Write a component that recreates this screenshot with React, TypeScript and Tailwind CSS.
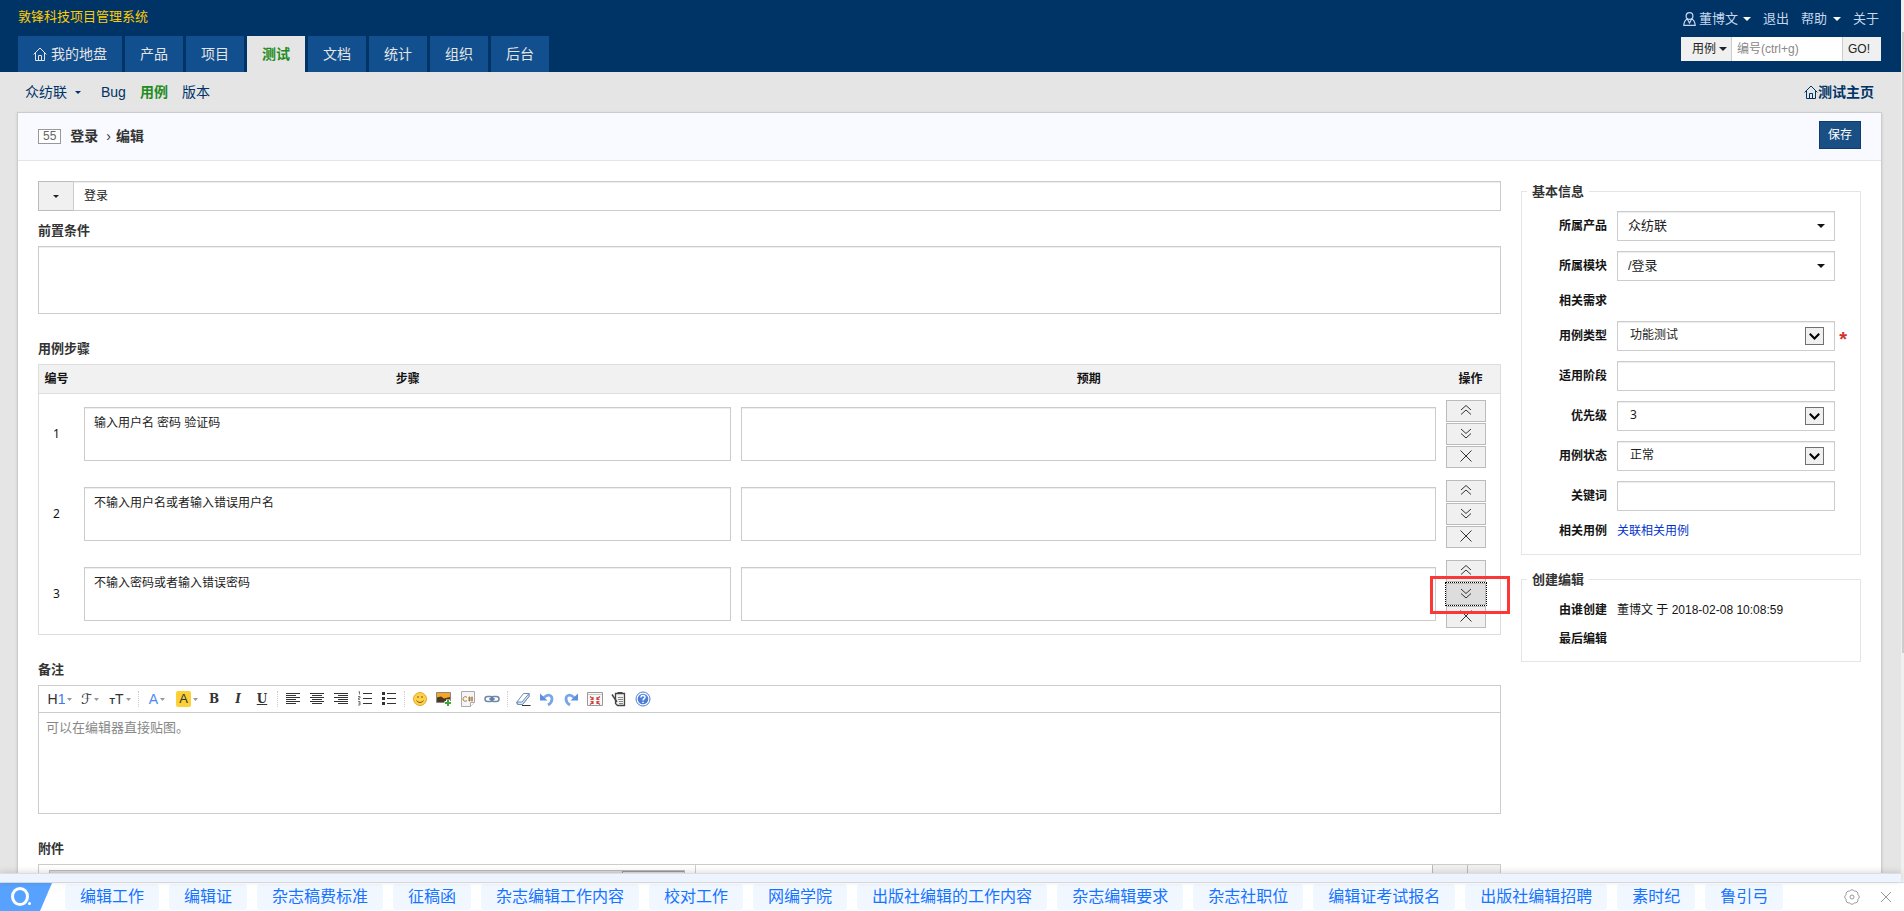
import clsx from "clsx";
import { Fragment, ReactNode } from "react";

const NAV = ["产品", "项目", "测试", "文档", "统计", "组织", "后台"];

const STEPS = [
  "输入用户名 密码 验证码",
  "不输入用户名或者输入错误用户名",
  "不输入密码或者输入错误密码"
];

const HOT_LINKS = [
  "编辑工作",
  "编辑证",
  "杂志稿费标准",
  "征稿函",
  "杂志编辑工作内容",
  "校对工作",
  "网编学院",
  "出版社编辑的工作内容",
  "杂志编辑要求",
  "杂志社职位",
  "编辑证考试报名",
  "出版社编辑招聘",
  "素时纪",
  "鲁引弓"
];

const FIELD = "block border border-[#ccc] bg-white shadow-[inset_0_1px_1px_rgba(0,0,0,0.075)] outline-none";
const INPUT_FONT = "font-['Noto_Sans','Noto_Sans_CJK_SC',sans-serif]";

function Caret({ className }: { className?: string }) {
  return (
    <svg viewBox="0 0 8 4" className={clsx("h-1 w-2 shrink-0 fill-current", className)} aria-hidden>
      <path d="M0 0h8L4 4z" />
    </svg>
  );
}

function HomeIcon() {
  return (
    <svg viewBox="0 0 14 14" className="h-3.5 w-3.5 shrink-0" fill="none" stroke="currentColor" aria-hidden>
      <path d="M.6 7.4 7 1l6.4 6.4M2.5 6v7.5h9V6M5.5 13.5v-5h3v5" />
    </svg>
  );
}

function UserIcon() {
  return (
    <svg viewBox="0 0 13 14" className="h-3.5 w-[13px] shrink-0" fill="none" stroke="currentColor" strokeWidth="1.2" aria-hidden>
      <circle cx="6.5" cy="4" r="3.4" />
      <path d="M4.3 6.8C2.2 8 1 10.5.8 13.4h11.4C12 10.5 10.800 8 8.700 6.800M4.300 7l2.200 4L8.700 7" />
    </svg>
  );
}

function Header() {
  return (
    <header className="flex h-[72px] justify-between bg-[#036] pl-[18px] pr-5">
      <div className="flex flex-col justify-between">
        <h1 className="pt-[7px] text-[13px] leading-5 text-[#fc0]">敦锋科技项目管理系统</h1>
        <nav className="flex gap-[3px] text-sm">
          <a href="#my" className="flex h-9 items-center gap-1 bg-[#114f8e] px-[15px] text-[#e5e5e5]">
            <HomeIcon />
            我的地盘
          </a>
          {NAV.map((name) => (
            <a
              key={name}
              href="#nav"
              className={clsx(
                "flex h-9 items-center px-[15px]",
                name === "测试" ? "bg-[#e5e5e5] font-bold text-[#228b22]" : "bg-[#114f8e] text-[#e5e5e5]"
              )}
            >
              {name}
            </a>
          ))}
        </nav>
      </div>
      <div className="flex flex-col items-end">
        <div className="flex items-center gap-3 pr-[2px] pt-[9px] text-[13px] leading-5 text-[#c6d8ee]">
          <a href="#user" className="flex items-center gap-[3px]">
            <UserIcon />
            董博文
            <Caret className="ml-[2px] text-white" />
          </a>
          <a href="#logout">退出</a>
          <a href="#help" className="flex items-center gap-[6px]">
            帮助
            <Caret className="text-white" />
          </a>
          <a href="#about">关于</a>
        </div>
        <form className="mt-2 flex h-6 w-[200px] text-xs">
          <button type="button" className="flex w-[51px] items-center gap-[3px] border-r border-[#ccc] bg-[#f0f0f0] pl-[11px] text-[#222]">
            用例
            <Caret />
          </button>
          <input
            aria-label="编号"
            placeholder="编号(ctrl+g)"
            className="min-w-0 flex-1 bg-white px-[5px] outline-none placeholder:text-[#888]"
          />
          <button type="button" className="w-[39px] border-l border-[#ccc] bg-[#f0f0f0] pr-[6px] text-[#222]">
            GO!
          </button>
        </form>
      </div>
    </header>
  );
}

function SubNav() {
  return (
    <div className="flex h-10 items-center justify-between pl-[25px] pr-[27px] text-sm text-[#036]">
      <nav className="flex items-center">
        <a href="#product" className="flex items-center gap-2">
          众纺联
          <svg viewBox="0 0 6 3" className="h-[3px] w-[6px] fill-current" aria-hidden>
            <path d="M0 0h6L3 3z" />
          </svg>
        </a>
        <a href="#bug" className="ml-5">Bug</a>
        <a href="#case" className="ml-[14px] font-bold text-[#228b22]">用例</a>
        <a href="#build" className="ml-[14px]">版本</a>
      </nav>
      <a href="#home" className="flex items-center font-bold">
        <HomeIcon />
        测试主页
      </a>
    </div>
  );
}

function Label({ children, className, htmlFor }: { children: string; className?: string; htmlFor?: string }) {
  return (
    <label htmlFor={htmlFor} className={clsx("mb-[5px] block text-[13px] font-bold leading-5 text-[#333]", className)}>
      {children}
    </label>
  );
}

const STEP_ACTIONS = [
  { name: "之前添加", d: "M3 8l5-4.5L13 8M3 12.5l5-4.5 5 4.5" },
  { name: "之后添加", d: "M3 4l5 4.5L13 4M3 8.5l5 4.5 5-4.5" },
  { name: "删除", d: "M2.5 2.5l11 11M13.5 2.5l-11 11" }
];

function StepTable() {
  return (
    <table className="w-full table-fixed border-separate border-spacing-0 border border-[#ddd] text-xs text-[#141414]">
      <thead>
        <tr className="h-[29px] bg-[#f1f1f1]">
          <th className="w-10 border-b border-[#ddd] pr-[5px]">编号</th>
          <th className="w-[45%] border-b border-[#ddd]">步骤</th>
          <th className="border-b border-[#ddd]">预期</th>
          <th className="w-[59px] border-b border-[#ddd]">操作</th>
        </tr>
      </thead>
      <tbody>
        {STEPS.map((step, i) => (
          <tr key={step} className="h-20">
            <td className={clsx("pr-[5px] text-center", INPUT_FONT)}>{i + 1}</td>
            <td className="px-[5px]">
              <textarea
                aria-label={`步骤 ${i + 1}`}
                defaultValue={step}
                className={clsx(FIELD, "h-[54px] w-full resize-none px-[9px] py-[5px] leading-5 text-[#222]", INPUT_FONT)}
              />
            </td>
            <td className="px-[5px]">
              <textarea
                aria-label={`预期 ${i + 1}`}
                className={clsx(FIELD, "h-[54px] w-full resize-none px-[9px] py-[5px] leading-5")}
              />
            </td>
            <td className="px-[5px]">
              <div className="relative flex w-10 flex-col gap-px">
                {STEP_ACTIONS.map((action, j) => {
                  const active = i === 2 && j === 1;
                  return (
                    <button
                      key={action.name}
                      type="button"
                      aria-label={action.name}
                      className={clsx(
                        "flex h-[22px] items-center justify-center border border-[#bbb]",
                        active ? "bg-[#ddd] outline-1 outline-dotted outline-black" : "bg-[#f0f0f0]"
                      )}
                    >
                      <svg viewBox="0 0 16 16" className="mb-[2px] h-4 w-4" fill="none" stroke="#333" aria-hidden>
                        <path d={action.d} />
                      </svg>
                    </button>
                  );
                })}
                {i === 2 && (
                  <div className="pointer-events-none absolute -left-4 top-4 h-[38px] w-20 border-3 border-[#fb3838]" />
                )}
              </div>
            </td>
          </tr>
        ))}
      </tbody>
    </table>
  );
}

function Icon({ children }: { children: ReactNode }) {
  return (
    <svg viewBox="0 0 16 16" className="h-4 w-4" fill="none" stroke="#333" aria-hidden>
      {children}
    </svg>
  );
}

function DropMark() {
  return (
    <svg viewBox="0 0 5 3" className="h-[3px] w-[5px] fill-[#999]" aria-hidden>
      <path d="M0 0h5L2.5 3z" />
    </svg>
  );
}

const TEXT_TOOLS = [
  { name: "段落", mark: <span className="text-sm">H<span className="text-[#3c7cf0]">1</span></span> },
  { name: "字体", mark: <span className="font-['DejaVu_Sans',sans-serif] text-sm">ℱ</span> },
  { name: "文字大小", mark: <span className="text-sm"><b className="text-[9px]">T</b>T</span> },
  null,
  { name: "文字颜色", mark: <span className="text-sm text-[#4a8af4]">A</span> },
  { name: "文字背景", mark: <span className="h-4 w-[15px] rounded-xs bg-[#fdd035] text-center text-[13px] leading-4">A</span> }
];

const ICON_TOOLS: ({ name: string; icon: ReactNode } | null)[] = [
  { name: "左对齐", icon: <path d="M1 2.500h14M1 4.500h10M1 6.500h14M1 8.500h10M1 10.500h14M1 12.500h10" /> },
  { name: "居中", icon: <path d="M1 2.500h14M3 4.500h10M1 6.500h14M3 8.500h10M1 10.500h14M3 12.500h10" /> },
  { name: "右对齐", icon: <path d="M1 2.500h14M5 4.500h10M1 6.500h14M5 8.500h10M1 10.500h14M5 12.500h10" /> },
  {
    name: "编号",
    icon: (
      <>
        <path d="M6 2.500h9M6 7.500h9M6 12.500h9" />
        <path stroke="#555" strokeWidth=".8" d="M1.500 1 2.500.500v3M1 5.500h2v1.500H1.500v1.500H3M1 10.500h2v3.500H1M1.500 12.200H3" />
      </>
    )
  },
  {
    name: "项目符号",
    icon: (
      <>
        <path d="M6 2.500h9M6 7.500h9M6 12.500h9" />
        <path strokeWidth="3" d="M1 2.500h3M1 7.500h3M1 12.500h3" />
      </>
    )
  },
  null,
  {
    name: "插入表情",
    icon: (
      <>
        <circle cx="8" cy="8" r="6.5" fill="#fcd14b" stroke="#e8a72c" />
        <path stroke="#8a5510" d="M4.500 9.500c1.500 2.600 5.500 2.600 7 0M6 5v2M10 5v2" />
      </>
    )
  },
  {
    name: "图片",
    icon: (
      <>
        <path fill="#f6a623" stroke="#888" d="M.5 1.500h14v10H.5z" />
        <path fill="#4b3722" stroke="none" d="M1 6.500l4-1 3 2 6-1.500V11H1z" />
        <path stroke="#fff" strokeWidth="4" d="M8.500 12h7M12 8.500v7" />
        <path stroke="#3fa535" strokeWidth="2" d="M9 12h6M12 9v6" />
      </>
    )
  },
  {
    name: "插入程序代码",
    icon: (
      <>
        <path fill="#f5f5f5" stroke="#aaa" d="M1.500.500h13v11l-4 4h-9z" />
        <path stroke="#aaa" fill="#fff" d="M10.500 15.500v-4h4" />
        <path stroke="#a67b3c" d="M7 6.300c-2.500-1.500-4 0-4 1.700s1.500 3 4 1.700M9.500 5.500v5M12 5.500v5M8 7h5M8 9h5" />
      </>
    )
  },
  {
    name: "超级链接",
    icon: (
      <>
        <rect x="1" y="5.5" width="8" height="5" rx="2.5" stroke="#6f88a8" strokeWidth="1.5" />
        <rect x="7" y="5.5" width="8" height="5" rx="2.5" stroke="#6f88a8" strokeWidth="1.5" />
        <path stroke="#47618a" d="M5 8h6" />
      </>
    )
  },
  null,
  {
    name: "删除格式",
    icon: (
      <>
        <path fill="#fff" stroke="#6d8db8" strokeLinejoin="round" d="M1.500 11.500 8.500 2.500H14v3L7.500 13.500h-5z" />
        <path fill="#dbe7f5" stroke="#6d8db8" d="M2 11h5l7-8.500V5.500L7.500 13.500H3z" />
        <path stroke="#333" d="M7 14.500h8.500" />
      </>
    )
  },
  {
    name: "后退",
    icon: (
      <>
        <path stroke="#7aa6e6" strokeWidth="2.8" d="M5 6.500c4-4 8-2.500 8 1.500 0 3-1.500 4.500-4 6" />
        <path fill="#5d8fe0" stroke="none" d="M1 2.500v7h7.500z" />
      </>
    )
  },
  {
    name: "前进",
    icon: (
      <>
        <path stroke="#7aa6e6" strokeWidth="2.8" d="M11 6.500C7 2.500 3 4 3 8c0 3 1.500 4.500 4 6" />
        <path fill="#5d8fe0" stroke="none" d="M15 2.500v7H7.500z" />
      </>
    )
  },
  {
    name: "全屏显示",
    icon: (
      <>
        <path fill="#f8f8f8" stroke="#999" d="M.5 1.500h15v13H.5z" />
        <path stroke="#ccc" d="M1 3.500h14" />
        <path stroke="#d24040" strokeWidth="1.200" d="M3.500 8.500h2.500V6M6 8 3 5.500M12.500 8.500H10V6M10 8l3-2.500M3.500 10.500h2.500V13M6 11l-3 2.500M12.500 10.500H10V13M10 11l3 2.500" />
      </>
    )
  },
  {
    name: "HTML代码",
    icon: (
      <>
        <path fill="#f2f2f2" stroke="#444" strokeWidth="1.3" d="M4.500 2.500h9v12h-7l-2-2z" />
        <path strokeWidth="1.5" stroke="#444" d="M6.500 1.800h5M1 3.500l5 7.500" />
        <path stroke="#888" d="M7 6.500h5M7 8.500h5M8 10.500h4M8 12.500h4" />
      </>
    )
  },
  {
    name: "关于",
    icon: (
      <>
        <circle cx="8" cy="8" r="7" fill="#fff" stroke="#4d7ed6" />
        <circle cx="8" cy="8" r="5.3" fill="#4d7ed6" stroke="none" />
        <path stroke="#fff" strokeWidth="1.5" d="M6 6.500c0-2.500 4-2.500 4-.3C10 7.700 8 7.700 8 9.500M8 10.700v1.400" />
      </>
    )
  }
];

const SERIF_TOOLS = [
  { name: "粗体", text: "B", style: "font-bold" },
  { name: "斜体", text: "I", style: "font-bold italic" },
  { name: "下划线", text: "U", style: "font-bold underline" }
];

function Separator() {
  return <span className="mx-[3px] h-4 w-px border-l border-dotted border-[#ccc]" />;
}

function Editor() {
  return (
    <div className="border border-[#ccc]">
      <div className="flex h-[27px] items-center border-b border-[#ccc] pl-[6px] text-[#333]">
        {TEXT_TOOLS.map((tool, i) =>
          tool ? (
            <button key={tool.name} type="button" aria-label={tool.name} className="flex h-6 w-[30px] items-center justify-center gap-[2px] leading-none">
              {tool.mark}
              <DropMark />
            </button>
          ) : (
            <Separator key={i} />
          )
        )}
        {SERIF_TOOLS.map((tool) => (
          <button
            key={tool.name}
            type="button"
            aria-label={tool.name}
            className={clsx("h-6 w-6 font-['DejaVu_Serif',serif] text-xs leading-6", tool.style)}
          >
            {tool.text}
          </button>
        ))}
        <Separator />
        {ICON_TOOLS.map((tool, i) => (
          <Fragment key={tool ? tool.name : i}>
            {tool ? (
              <button type="button" aria-label={tool.name} className="flex h-6 w-6 items-center justify-center">
                <Icon>{tool.icon}</Icon>
              </button>
            ) : (
              <Separator />
            )}
          </Fragment>
        ))}
      </div>
      <textarea
        id="remark"
        placeholder="可以在编辑器直接贴图。"
        className="block h-[100px] w-full resize-none px-[7px] py-[5px] text-[13px] leading-5 outline-none placeholder:text-[#888]"
      />
    </div>
  );
}

function Attachment() {
  return (
    <div className="flex h-8 border border-[#ccc] bg-white">
      <div className="flex w-[45%] border-r border-[#ccc] px-[10px] pt-[5px]">
        <button type="button" aria-label="选择文件" className="flex h-6 w-[637px] justify-end border border-[#bbb] bg-[#ddd]">
          <span className="h-6 w-[62px] border-l border-t border-[#999] bg-[#e1e1e1]" />
        </button>
      </div>
      <input aria-label="标题" className="min-w-0 flex-1 outline-none" />
      <button type="button" aria-label="添加附件" className="flex w-[35px] justify-center border-l border-[#bbb] bg-[#f0f0f0] pt-2">
        <svg viewBox="0 0 12 12" className="h-3 w-3" stroke="#333" aria-hidden>
          <path d="M6 0v12M0 6h12" />
        </svg>
      </button>
      <button type="button" aria-label="删除附件" className="flex w-[33px] justify-center border-l border-[#bbb] bg-[#f0f0f0] pt-2">
        <svg viewBox="0 0 12 12" className="h-3 w-3" stroke="#333" aria-hidden>
          <path d="M.5.5l11 11M11.5.5l-11 11" />
        </svg>
      </button>
    </div>
  );
}

function Row({ label, id, children }: { label: string; id?: string; children?: ReactNode }) {
  return (
    <div className="flex min-h-5 items-center gap-[10px]">
      <label htmlFor={id} className="w-[76px] shrink-0 text-right font-bold">{label}</label>
      {children}
    </div>
  );
}

function Picker({ id, value }: { id: string; value: string }) {
  return (
    <div className="relative w-[218px]">
      <select id={id} className={clsx(FIELD, "h-[30px] w-full appearance-none px-[10px] text-[13px] text-[#222]")}>
        <option>{value}</option>
      </select>
      <Caret className="pointer-events-none absolute right-[10px] top-[13px]" />
    </div>
  );
}

function Select({ id, value }: { id: string; value: string }) {
  return (
    <div className="relative w-[218px]">
      <select id={id} className={clsx(FIELD, "h-[30px] w-full appearance-none px-3 pb-[2px] text-xs text-[#222]", INPUT_FONT)}>
        <option>{value}</option>
      </select>
      <span className="pointer-events-none absolute right-[11px] top-[6px] flex h-[18px] w-[19px] items-center justify-center border border-[#707070] bg-[#f0f0f0]">
        <svg viewBox="0 0 11 7" className="h-[7px] w-[11px]" fill="none" stroke="#000" strokeWidth="2" aria-hidden>
          <path d="M.8.8 5.5 5.5 10.2.8" />
        </svg>
      </span>
    </div>
  );
}

function SideBar() {
  const input = clsx(FIELD, "h-[30px] w-[218px] px-[10px]");
  const legend = "-ml-1 h-5 px-[5px] text-[13px] font-bold leading-[22px] text-[#333]";
  return (
    <aside className="w-[340px] shrink-0 text-xs text-[#141414]">
      <fieldset className="border border-[#e5e5e5] px-[9px] pb-[13px]">
        <legend className={legend}>基本信息</legend>
        <div className="mt-[10px] flex flex-col gap-[10px]">
          <Row label="所属产品" id="product"><Picker id="product" value="众纺联" /></Row>
          <Row label="所属模块" id="module"><Picker id="module" value="/登录" /></Row>
          <Row label="相关需求" />
          <div className="relative">
            <Row label="用例类型" id="type"><Select id="type" value="功能测试" /></Row>
            <span className="absolute right-1 top-2 text-xl font-bold leading-5 text-[#d2322d]">*</span>
          </div>
          <Row label="适用阶段" id="stage"><input id="stage" className={input} /></Row>
          <Row label="优先级" id="pri"><Select id="pri" value="3" /></Row>
          <Row label="用例状态" id="status"><Select id="status" value="正常" /></Row>
          <Row label="关键词" id="keywords"><input id="keywords" className={input} /></Row>
          <Row label="相关用例"><a href="#link" className="text-[#03c]">关联相关用例</a></Row>
        </div>
      </fieldset>
      <fieldset className="mt-[14px] border border-[#e5e5e5] px-[9px] pb-3">
        <legend className={legend}>创建编辑</legend>
        <div className="mt-[11px] flex flex-col gap-[9px]">
          <Row label="由谁创建"><span>董博文 于 2018-02-08 10:08:59</span></Row>
          <Row label="最后编辑" />
        </div>
      </fieldset>
    </aside>
  );
}

function HotBar() {
  return (
    <footer className="flex h-[29px] shrink-0 items-center justify-between border-t border-[#e2e2e2] bg-white">
      <div className="flex items-center">
        <a href="#search" aria-label="搜索" className="mr-[13px]">
          <svg viewBox="0 0 52 28" className="h-7 w-[52px]" aria-hidden>
            <path fill="#57a1ff" d="M0 0h52L40 28H0z" />
            <ellipse cx="20" cy="13.5" rx="7.5" ry="8" fill="none" stroke="#fff" strokeWidth="3" />
            <circle cx="29.5" cy="20.5" r="1.5" fill="#fff" />
          </svg>
        </a>
        <nav className="flex gap-[10px]">
          {HOT_LINKS.map((name) => (
            <a key={name} href="#hot" className="h-[26px] rounded-[3px] bg-[#f0f7ff] px-[15px] text-base leading-[26px] text-[#1673ff]">
              {name}
            </a>
          ))}
        </nav>
      </div>
      <div className="flex items-center gap-5 pr-3 text-[#999]">
        <button type="button" aria-label="设置">
          <svg viewBox="0 0 16 16" className="block h-4 w-4" fill="none" stroke="currentColor" aria-hidden>
            <path d="M10.400 2.200A2.700 2.700 0 0 1 13.800 5.600 2.700 2.700 0 0 1 13.800 10.400 2.700 2.700 0 0 1 10.400 13.800 2.700 2.700 0 0 1 5.600 13.800 2.700 2.700 0 0 1 2.200 10.400 2.700 2.700 0 0 1 2.200 5.600 2.700 2.700 0 0 1 5.600 2.200 2.700 2.700 0 0 1 10.400 2.200z" />
            <circle cx="8" cy="8" r="2" />
          </svg>
        </button>
        <button type="button" aria-label="关闭">
          <svg viewBox="0 0 12 12" className="block h-3 w-3" fill="none" stroke="currentColor" aria-hidden>
            <path d="M1 1l10 10M11 1 1 11" />
          </svg>
        </button>
      </div>
    </footer>
  );
}

export default function App() {
  return (
    <div className="flex h-screen flex-col overflow-hidden font-['Liberation_Sans','Noto_Sans_CJK_SC',sans-serif]">
      <div className="flex min-h-0 flex-1">
        <div className="flex min-w-0 flex-1 flex-col">
          <div className="min-h-0 flex-1 overflow-hidden bg-[#e5e5e5]">
            <Header />
            <SubNav />
            <main className="ml-[17px] mr-[19px] border border-[#ccc] bg-white shadow-sm">
              <div className="flex h-12 items-center border-b border-[#e5e5e5] bg-[#f8faff] px-5 text-sm">
                <span className="border border-[#999] bg-white px-1 text-xs leading-[13px] text-[#666]">55</span>
                <h2 className="mb-[2px] ml-[9px] flex items-center font-bold text-[#333]">
                  登录
                  <span className="ml-2 mr-[5px] font-normal">›</span>
                  编辑
                </h2>
                <button type="submit" className="mb-[3px] ml-auto h-7 w-[42px] border border-[#0d3d70] bg-[#1a4f85] text-xs text-white">
                  保存
                </button>
              </div>
              <form className="flex gap-5 p-5">
                <div className="min-w-0 flex-1">
                  <div className="flex h-[30px]">
                    <button type="button" aria-label="颜色" className="flex w-[35px] items-center justify-center border border-r-0 border-[#bbb] bg-[#f0f0f0]">
                      <svg viewBox="0 0 6 3" className="h-[3px] w-[6px] fill-[#222]" aria-hidden>
                        <path d="M0 0h6L3 3z" />
                      </svg>
                    </button>
                    <input aria-label="用例标题" defaultValue="登录" className={clsx(FIELD, "min-w-0 flex-1 px-[10px] text-xs text-[#222]")} />
                  </div>
                  <Label htmlFor="precondition" className="mt-[10px]">前置条件</Label>
                  <textarea id="precondition" className={clsx(FIELD, "h-[68px] w-full resize-none px-[9px] py-[5px] text-xs")} />
                  <Label className="mt-[25px]">用例步骤</Label>
                  <StepTable />
                  <Label htmlFor="remark" className="mt-[25px]">备注</Label>
                  <Editor />
                  <Label className="mt-[25px]">附件</Label>
                  <Attachment />
                </div>
                <SideBar />
              </form>
            </main>
          </div>
          <div className="z-10 h-[9px] shrink-0 border-t border-[#ddd] bg-[#edf3ff] shadow-[0_-1px_6px_rgba(0,0,0,0.15)]" />
        </div>
        <div className="w-[3px] shrink-0 bg-[#f0f0f0] pl-px pt-8">
          <div className="h-[621px] bg-[#cdcdcd]" />
        </div>
      </div>
      <HotBar />
    </div>
  );
}
